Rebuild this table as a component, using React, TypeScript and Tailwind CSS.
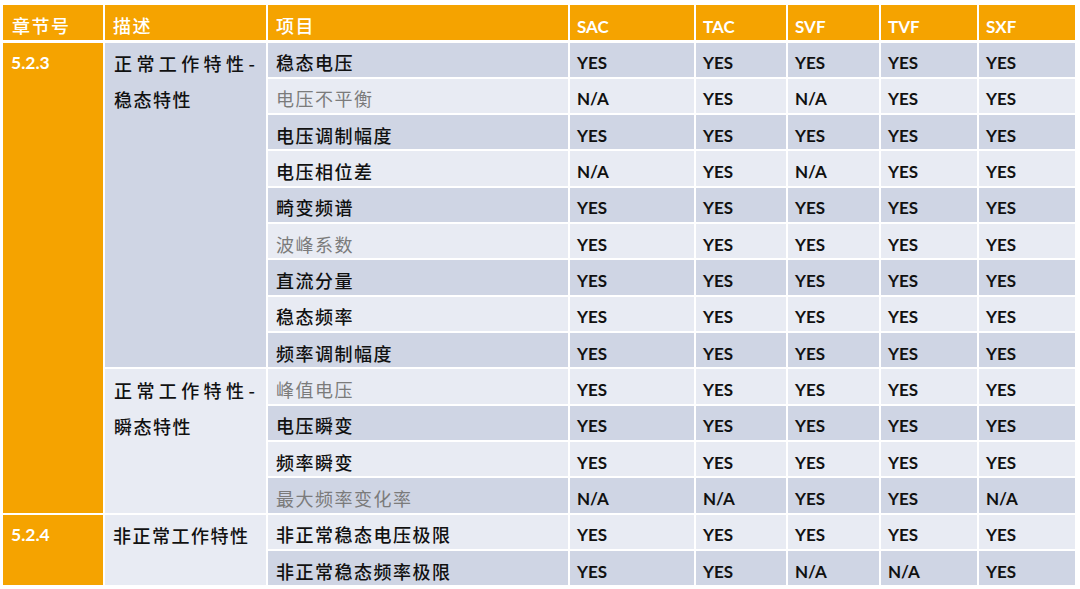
const HEADERS = ["SAC", "TAC", "SVF", "TVF", "SXF"];

type Row = { item: string; muted?: boolean; vals: string[] };

const Y = "YES";
const N = "N/A";

const ROWS: Row[] = [
  { item: "稳态电压", vals: [Y, Y, Y, Y, Y] },
  { item: "电压不平衡", muted: true, vals: [N, Y, N, Y, Y] },
  { item: "电压调制幅度", vals: [Y, Y, Y, Y, Y] },
  { item: "电压相位差", vals: [N, Y, N, Y, Y] },
  { item: "畸变频谱", vals: [Y, Y, Y, Y, Y] },
  { item: "波峰系数", muted: true, vals: [Y, Y, Y, Y, Y] },
  { item: "直流分量", vals: [Y, Y, Y, Y, Y] },
  { item: "稳态频率", vals: [Y, Y, Y, Y, Y] },
  { item: "频率调制幅度", vals: [Y, Y, Y, Y, Y] },
  { item: "峰值电压", muted: true, vals: [Y, Y, Y, Y, Y] },
  { item: "电压瞬变", vals: [Y, Y, Y, Y, Y] },
  { item: "频率瞬变", vals: [Y, Y, Y, Y, Y] },
  { item: "最大频率变化率", muted: true, vals: [N, N, Y, Y, N] },
  { item: "非正常稳态电压极限", vals: [Y, Y, Y, Y, Y] },
  { item: "非正常稳态频率极限", vals: [Y, Y, N, N, Y] },
];

const COLS = "grid-cols-[100px_161px_300px_124px_90px_91px_96px_96px]";
const CJK = "font-['Noto_Sans_CJK_SC','Noto_Sans_CJK_JP',sans-serif]";
const LAT = "font-['Lato','Liberation_Sans',sans-serif] font-bold";

function Line({ children, className = "" }: { children: React.ReactNode; className?: string }) {
  return <div className={`flex h-[36.2px] items-center pt-[5px] ${className}`}>{children}</div>;
}

export default function App() {
  return (
    <div className="h-[589px] w-[1080px] bg-white pt-[5px] pl-[3px]">
      {/* header */}
      <div className={`grid ${COLS} h-[33px] gap-x-[2px]`}>
        {["章节号", "描述", "项目"].map((h, i) => (
          <div
            key={h}
            className={`flex items-center bg-[#f5a300] pt-[6px] text-[18px] font-medium tracking-[1.5px] text-white ${CJK} ${
              i === 0 ? "pl-[9px]" : "pl-[8px]"
            }`}
          >
            {h}
          </div>
        ))}
        {HEADERS.map((h) => (
          <div key={h} className={`flex items-center bg-[#f5a300] pt-[9px] pl-[7px] text-[17px] text-white ${LAT}`}>
            {h}
          </div>
        ))}
      </div>

      {/* body */}
      <div className={`mt-[4.5px] grid ${COLS} h-[543px] grid-rows-[repeat(15,minmax(0,1fr))] gap-[2px]`}>
        {ROWS.map((r, i) => {
          const bg = i % 2 === 0 ? "bg-[#cfd5e4]" : "bg-[#e8ebf3]";
          return [
            i === 0 && (
              <div key="c1a" className={`row-span-13 bg-[#f5a300] pl-[8px] text-[17.5px] text-white ${LAT}`}>
                <Line>5.2.3</Line>
              </div>
            ),
            i === 13 && (
              <div key="c1b" className={`row-span-2 bg-[#f5a300] pl-[8px] text-[17.5px] text-white ${LAT}`}>
                <Line>5.2.4</Line>
              </div>
            ),
            i === 0 && (
              <div key="c2a" className={`row-span-9 bg-[#cfd5e4] pl-[9px] text-[18px] font-medium text-[#111] ${CJK}`}>
                <Line className="tracking-[4.4px]">正常工作特性-</Line>
                <Line className="tracking-[1.5px]">稳态特性</Line>
              </div>
            ),
            i === 9 && (
              <div key="c2b" className={`row-span-4 bg-[#e8ebf3] pl-[9px] text-[18px] font-medium text-[#111] ${CJK}`}>
                <Line className="tracking-[4.4px]">正常工作特性-</Line>
                <Line className="tracking-[1.5px]">瞬态特性</Line>
              </div>
            ),
            i === 13 && (
              <div
                key="c2c"
                className={`row-span-2 bg-[#e8ebf3] pl-[8px] text-[18px] font-medium tracking-[1.5px] text-[#111] ${CJK}`}
              >
                <Line>非正常工作特性</Line>
              </div>
            ),
            <div
              key={`it${i}`}
              className={`flex items-center pt-[6px] pl-[8px] text-[18px] tracking-[1.5px] ${bg} ${CJK} ${
                r.muted ? "font-normal text-[#7b7b7b]" : "font-medium text-[#111]"
              }`}
            >
              {r.item}
            </div>,
            ...r.vals.map((v, j) => (
              <div
                key={`v${i}-${j}`}
                className={`flex items-center pt-[6px] pl-[7px] text-[17px] text-[#111] ${bg} ${LAT}`}
              >
                {v}
              </div>
            )),
          ];
        })}
      </div>
    </div>
  );
}
